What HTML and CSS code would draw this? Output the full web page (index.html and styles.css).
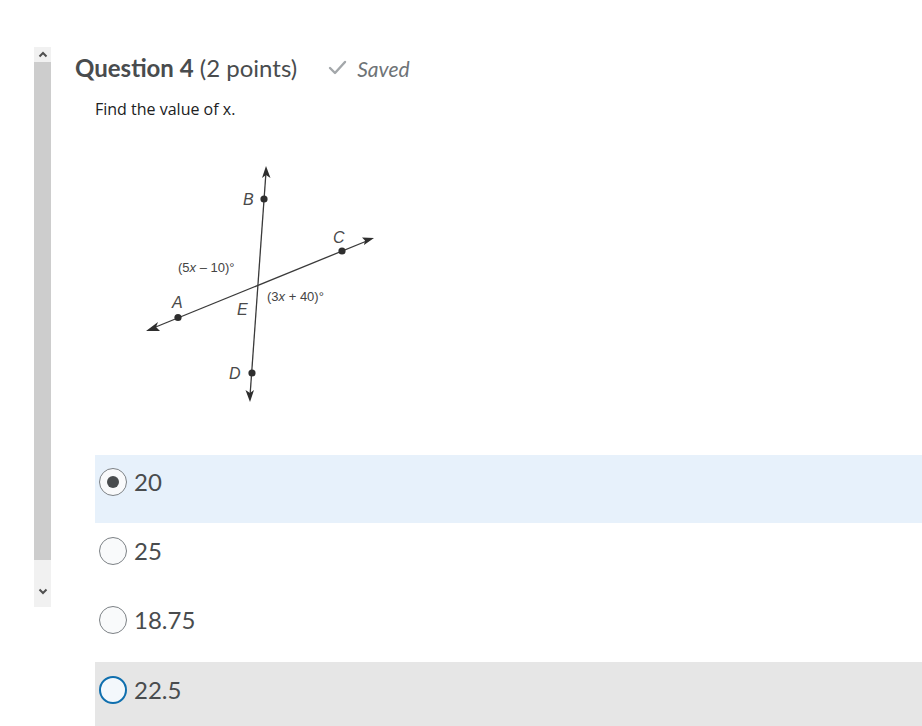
FILE: index.html
```html
<!DOCTYPE html>
<html>
<head>
<meta charset="utf-8">
<link rel="stylesheet" href="styles.css">
</head>
<body>
<div class="page">
  <div class="scrollbar">
    <div class="sb-btn sb-up"><svg width="10" height="7" viewBox="0 0 10 7"><path d="M1.5 5.5 L5 2 L8.5 5.5" fill="none" stroke="#505050" stroke-width="2"/></svg></div>
    <div class="sb-thumb"></div>
    <div class="sb-rest"></div>
    <div class="sb-btn sb-down"><svg width="10" height="7" viewBox="0 0 10 7"><path d="M1.5 1.5 L5 5 L8.5 1.5" fill="none" stroke="#505050" stroke-width="2"/></svg></div>
  </div>
  <div class="main">
    <div class="q-head">
      <span class="q-title"><b>Question 4</b> (2 points)</span>
      <span class="saved">
        <svg class="check" width="19" height="15" viewBox="0 0 19 15"><path d="M2 8 L7 13 L17 2" fill="none" stroke="#a3a7aa" stroke-width="2.4" stroke-linecap="round" stroke-linejoin="round"/></svg>
        <i>Saved</i>
      </span>
    </div>
    <div class="q-body">
      <p class="prompt">Find the value of x.</p>
      <svg class="diagram" width="250" height="250" viewBox="140 160 250 250">
        <g stroke="#3a3a3a" stroke-width="1.3" fill="none">
          <line x1="266" y1="172" x2="250" y2="396"/>
          <line x1="152" y1="328.5" x2="368" y2="240.5"/>
        </g>
        <g fill="#2e2e2e">
          <polygon points="266,166 262,178 266,175 270.5,178"/>
          <polygon points="250,402 245.5,390 250,393 254,390"/>
          <polygon points="146,331 158,322 156,327 160,331"/>
          <polygon points="374,238 362,237.5 365,240.5 364,245"/>
          <circle cx="264" cy="199" r="3.6"/>
          <circle cx="252" cy="373" r="3.6"/>
          <circle cx="178" cy="317.5" r="3.6"/>
          <circle cx="342" cy="251" r="3.6"/>
        </g>
        <g class="dlabel">
          <text x="243" y="205">B</text>
          <text x="333" y="243">C</text>
          <text x="172" y="308">A</text>
          <text x="237" y="315">E</text>
          <text x="229" y="379">D</text>
        </g>
        <g class="dexpr">
          <text x="178" y="272">(5<tspan class="ix">x</tspan> – 10)°</text>
          <text x="267" y="301">(3<tspan class="ix">x</tspan> + 40)°</text>
        </g>
      </svg>
    </div>
    <div class="options">
      <div class="opt opt-selected"><span class="radio radio-on"></span><span class="opt-text">20</span></div>
      <div class="opt"><span class="radio"></span><span class="opt-text">25</span></div>
      <div class="opt"><span class="radio"></span><span class="opt-text">18.75</span></div>
      <div class="opt opt-hover"><span class="radio radio-focus"></span><span class="opt-text">22.5</span></div>
    </div>
  </div>
</div>
</body>
</html>
```

FILE: styles.css
```css
html, body {
  margin: 0;
  padding: 0;
  background: #ffffff;
}
body {
  font-family: Lato, "Open Sans", sans-serif;
  color: #494c4e;
  overflow: hidden;
  height: 726px;
}
.page {
  display: flex;
  align-items: flex-start;
}
.scrollbar {
  margin-left: 34px;
  margin-top: 47px;
  width: 17px;
  display: flex;
  flex-direction: column;
  background: #f1f1f1;
  flex: none;
}
.sb-btn {
  height: 15px;
  display: flex;
  align-items: center;
  justify-content: center;
}
.sb-thumb {
  height: 498px;
  background: #cdcdcd;
}
.sb-rest {
  height: 26px;
}
.sb-down {
  height: 19px;
  align-items: flex-start;
  padding-top: 2px;
}
.main {
  flex: 1;
  margin-left: 24px;
  padding-top: 53px;
  display: flex;
  flex-direction: column;
  min-width: 0;
}
.q-head {
  display: flex;
  align-items: center;
  height: 30px;
}
.q-title {
  font-size: 24px;
  line-height: 30px;
  color: #494c4e;
}
.q-title b {
  font-weight: 700;
}
.saved {
  display: flex;
  align-items: center;
  gap: 10px;
  margin-left: 31px;
  color: #6e7376;
  font-size: 21px;
}
.saved i {
  font-style: italic;
}
.check {
  display: block;
  margin-top: -1px;
}
.q-body {
  padding-left: 20px;
}
.prompt {
  margin: 16px 0 0 0;
  font-family: "Open Sans", Lato, sans-serif;
  font-size: 16px;
  line-height: 20px;
  color: #202122;
}
.diagram {
  display: block;
  margin: 41px 0 0 45px;
}
.dlabel text {
  font-family: "Liberation Sans", Arial, sans-serif;
  font-style: italic;
  font-size: 16px;
  fill: #4a4a4a;
}
.dexpr text {
  font-family: "Liberation Sans", Arial, sans-serif;
  font-size: 13px;
  fill: #444;
}
.dexpr .ix {
  font-style: italic;
}
.options {
  margin-top: 45px;
  margin-left: 20px;
  display: flex;
  flex-direction: column;
  gap: 1px;
}
.opt {
  height: 68px;
  box-sizing: border-box;
  display: flex;
  align-items: flex-start;
  padding: 13px 0 0 4px;
}
.opt-selected {
  background: #e7f1fb;
}
.opt-hover {
  background: #e6e6e6;
  height: 70px;
  padding-top: 14px;
}
.radio {
  width: 28px;
  height: 28px;
  box-sizing: border-box;
  border-radius: 50%;
  border: 1px solid #7c8185;
  background: #f9fafb;
  display: flex;
  align-items: center;
  justify-content: center;
  flex: none;
}
.radio-on::after {
  content: "";
  width: 12px;
  height: 12px;
  border-radius: 50%;
  background: #494c4e;
}
.radio-focus {
  border: 2px solid #0f6fae;
  background: #f3f8fc;
}
.opt-text {
  margin-left: 7px;
  font-size: 24px;
  line-height: 28px;
  color: #494c4e;
}
```
